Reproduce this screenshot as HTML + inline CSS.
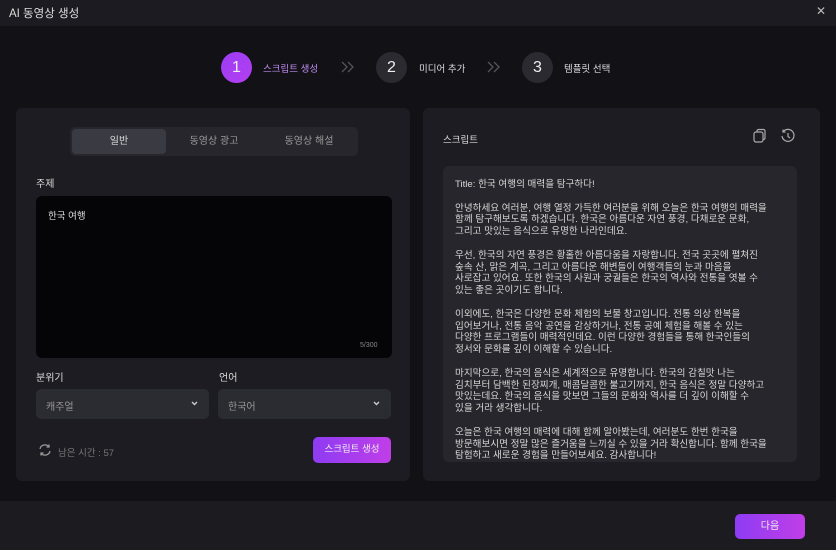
<!DOCTYPE html>
<html><head><meta charset="utf-8"><style>
*{margin:0;padding:0;box-sizing:border-box}
body{width:836px;height:550px;background:#111116;font-family:"Liberation Sans","Noto Sans CJK KR",sans-serif;color:#ddd;position:relative;overflow:hidden}
.abs{position:absolute}
.hdr{left:0;top:0;width:836px;height:26px;background:#1b1b21}
.panel{background:#1c1c22;border-radius:6px}
.step{width:31px;height:31px;border-radius:50%;background:#2a2a30;color:#eee;font-size:16px;display:flex;align-items:center;justify-content:center}
.lbl{font-size:9.5px;color:#ddd}
.field{background:#2b2b32;border-radius:5px;height:30px;font-size:10px;color:#999;padding:9px 0 0 10px}
.txt{font-size:9.6px;line-height:11.8px;color:#d8d8d8;white-space:nowrap}
</style></head><body>
<div class="abs hdr"></div>
<div class="abs" style="left:9px;top:5px;font-size:11.5px;color:#ddd">AI 동영상 생성</div>
<div class="abs" style="left:816px;top:4px;font-size:12px;color:#bbb">✕</div>

<div class="abs step" style="left:221px;top:52px;background:linear-gradient(135deg,#9b3df5,#b43ef0)">1</div>
<div class="abs lbl" style="left:263px;top:61px;color:#c08cf0">스크립트 생성</div>
<svg class="abs" style="left:341px;top:61px" width="14" height="12" viewBox="0 0 14 12" fill="none" stroke="#555" stroke-width="1.3"><path d="M1 1l5 5-5 5M7 1l5 5-5 5"/></svg>
<div class="abs step" style="left:376px;top:52px">2</div>
<div class="abs lbl" style="left:419px;top:61px">미디어 추가</div>
<svg class="abs" style="left:487px;top:61px" width="14" height="12" viewBox="0 0 14 12" fill="none" stroke="#555" stroke-width="1.3"><path d="M1 1l5 5-5 5M7 1l5 5-5 5"/></svg>
<div class="abs step" style="left:522px;top:52px">3</div>
<div class="abs lbl" style="left:564px;top:61px">템플릿 선택</div>

<div class="abs panel" style="left:16px;top:108px;width:394px;height:373px"></div>
<div class="abs" style="left:70px;top:127px;width:288px;height:29px;background:#26262c;border-radius:5px"></div>
<div class="abs" style="left:72px;top:129px;width:94px;height:25px;background:#3a3a42;border-radius:4px;font-size:10px;color:#ddd;text-align:center;line-height:25px">일반</div>
<div class="abs" style="left:166px;top:129px;width:96px;height:25px;font-size:10px;color:#999;text-align:center;line-height:25px">동영상 광고</div>
<div class="abs" style="left:262px;top:129px;width:94px;height:25px;font-size:10px;color:#999;text-align:center;line-height:25px">동영상 해설</div>
<div class="abs" style="left:36px;top:175px;font-size:10px;color:#ddd">주제</div>
<div class="abs" style="left:36px;top:196px;width:356px;height:162px;background:#050508;border-radius:6px"></div>
<div class="abs" style="left:48px;top:208px;font-size:9.5px;color:#ddd">한국 여행</div>
<div class="abs" style="left:360px;top:342px;font-size:7px;color:#888">5/300</div>
<div class="abs" style="left:36px;top:369px;font-size:10px;color:#ddd">분위기</div>
<div class="abs" style="left:219px;top:369px;font-size:10px;color:#ddd">언어</div>
<div class="abs field" style="left:36px;top:389px;width:173px">캐주얼<svg style="position:absolute;right:11px;top:12px" width="7" height="5" viewBox="0 0 7 5"><path d="M1 1l2.5 2.5L6 1" stroke="#ccc" stroke-width="1.4" fill="none"/></svg></div>
<div class="abs field" style="left:218px;top:389px;width:173px">한국어<svg style="position:absolute;right:11px;top:12px" width="7" height="5" viewBox="0 0 7 5"><path d="M1 1l2.5 2.5L6 1" stroke="#ccc" stroke-width="1.4" fill="none"/></svg></div>
<svg class="abs" style="left:38px;top:443px" width="14" height="14" viewBox="0 0 14 14" fill="none" stroke="#999" stroke-width="1.3"><path d="M2 6a5 5 0 0 1 9-2"/><path d="M11 1.5V4H8.5"/><path d="M12 8a5 5 0 0 1-9 2"/><path d="M3 12.5V10h2.5"/></svg>
<div class="abs" style="left:58px;top:445px;font-size:9.5px;color:#777">남은 시간 : 57</div>
<div class="abs" style="left:313px;top:437px;width:78px;height:26px;border-radius:5px;background:linear-gradient(90deg,#8e3cf2,#c03ee8);font-size:9.5px;color:#eee;text-align:center;line-height:26px">스크립트 생성</div>

<div class="abs panel" style="left:423px;top:108px;width:397px;height:373px"></div>
<div class="abs" style="left:443px;top:132px;font-size:9.5px;color:#ddd">스크립트</div>
<svg class="abs" style="left:752px;top:128px" width="16" height="16" viewBox="0 0 16 16" fill="none" stroke="#aaa" stroke-width="1.2"><rect x="2" y="4" width="9" height="10" rx="2"/><path d="M5 4V3a1.5 1.5 0 0 1 1.5-1.5h5A1.5 1.5 0 0 1 13 3v7a1.5 1.5 0 0 1-1.5 1.5H11"/></svg>
<svg class="abs" style="left:780px;top:128px" width="16" height="16" viewBox="0 0 16 16" fill="none" stroke="#aaa" stroke-width="1.2"><path d="M3 4a6 6 0 1 1-1 4"/><path d="M3 1.5V4h2.5"/><path d="M8 5v3.5l2 1.5"/></svg>
<div class="abs" style="left:443px;top:166px;width:354px;height:296px;background:#26262c;border-radius:6px;overflow:hidden">
<div class="abs txt" style="left:12px;top:13px;width:340px">
Title: 한국 여행의 매력을 탐구하다!<br><br>
안녕하세요 여러분, 여행 열정 가득한 여러분을 위해 오늘은 한국 여행의 매력을<br>함께 탐구해보도록 하겠습니다. 한국은 아름다운 자연 풍경, 다채로운 문화,<br>그리고 맛있는 음식으로 유명한 나라인데요.<br><br>
우선, 한국의 자연 풍경은 황홀한 아름다움을 자랑합니다. 전국 곳곳에 펼쳐진<br>숲속 산, 맑은 계곡, 그리고 아름다운 해변들이 여행객들의 눈과 마음을<br>사로잡고 있어요. 또한 한국의 사원과 궁궐들은 한국의 역사와 전통을 엿볼 수<br>있는 좋은 곳이기도 합니다.<br><br>
이외에도, 한국은 다양한 문화 체험의 보물 창고입니다. 전통 의상 한복을<br>입어보거나, 전통 음악 공연을 감상하거나, 전통 공예 체험을 해볼 수 있는<br>다양한 프로그램들이 매력적인데요. 이런 다양한 경험들을 통해 한국인들의<br>정서와 문화를 깊이 이해할 수 있습니다.<br><br>
마지막으로, 한국의 음식은 세계적으로 유명합니다. 한국의 감칠맛 나는<br>김치부터 담백한 된장찌개, 매콤달콤한 불고기까지, 한국 음식은 정말 다양하고<br>맛있는데요. 한국의 음식을 맛보면 그들의 문화와 역사를 더 깊이 이해할 수<br>있을 거라 생각합니다.<br><br>
오늘은 한국 여행의 매력에 대해 함께 알아봤는데, 여러분도 한번 한국을<br>방문해보시면 정말 많은 즐거움을 느끼실 수 있을 거라 확신합니다. 함께 한국을<br>탐험하고 새로운 경험을 만들어보세요. 감사합니다!
</div></div>

<div class="abs" style="left:0;top:501px;width:836px;height:49px;background:#1b1b20"></div>
<div class="abs" style="left:735px;top:514px;width:70px;height:25px;border-radius:5px;background:linear-gradient(90deg,#8e3cf2,#c03ee8);font-size:10px;color:#eee;text-align:center;line-height:25px">다음</div>
</body></html>
